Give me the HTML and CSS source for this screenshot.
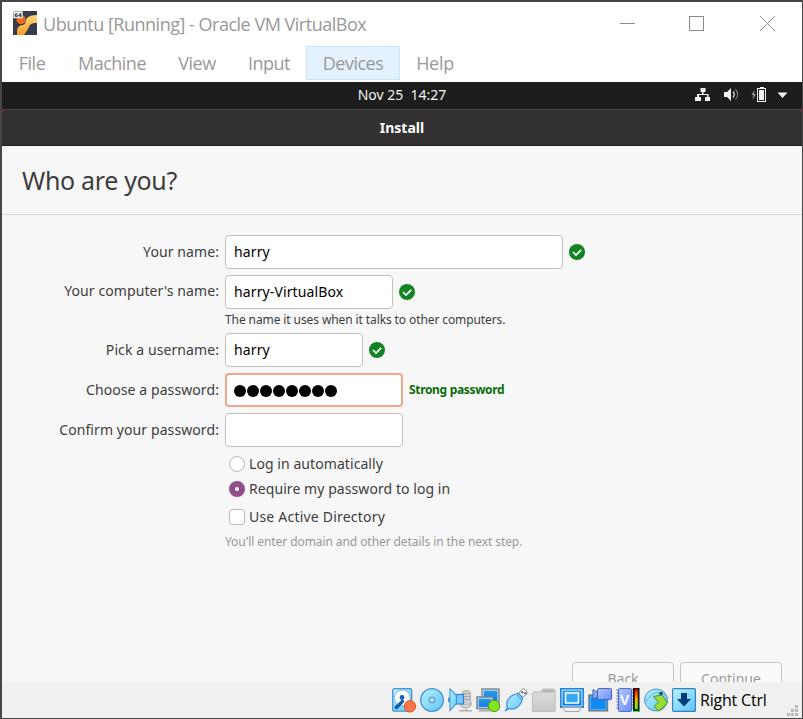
FILE: index.html
```html
<!DOCTYPE html>
<html lang="en">
<head>
<meta charset="utf-8">
<title>Ubuntu [Running] - Oracle VM VirtualBox</title>
<link rel="stylesheet" href="styles.css">
</head>
<body>
<div class="window">
  <header class="titlebar">
    <svg class="app-icon" width="24" height="24" viewBox="0 0 24 24">
      <defs><linearGradient id="or" x1="0" y1="0" x2="0" y2="1"><stop offset="0" stop-color="#ffd777"/><stop offset="1" stop-color="#f79a2c"/></linearGradient></defs>
      <rect width="24" height="24" fill="#363b49"/>
      <circle cx="8" cy="8.500" r="4.500" fill="#f36a1d"/>
      <path d="M4 24v-4c0-4 3-6 6-6 3-1 2-4 4-7 2-2 5-3 10-3v8c-5 0-7 1-8 4-1 2-3 5-5 8z" fill="url(#or)"/>
      <rect x=".5" y=".5" width="9" height="6.500" fill="#fff" stroke="#bbb" stroke-width=".7"/>
      <text x="1.200" y="6" class="badge64">64</text>
    </svg>
    <span class="title">Ubuntu [Running] - Oracle VM VirtualBox</span>
    <svg class="controls" width="156" height="17" viewBox="0 0 156 17" fill="none" stroke="#8c8c8c" shape-rendering="crispEdges">
      <path d="M0 8.500h15M69.500 1.500h14v14h-14z"/><path d="M140 1l15 15M155 1l-15 15" shape-rendering="auto"/>
    </svg>
  </header>
  <nav class="menu">
    <span class="m-file">File</span><span class="m-machine">Machine</span><span class="m-view">View</span><span class="m-input">Input</span><span class="m-devices active">Devices</span><span class="m-help">Help</span>
  </nav>
  <div class="topbar">
    <span class="clock">Nov 25&nbsp; 14:27</span>
    <svg class="tray" width="93" height="16" viewBox="0 0 93 16" fill="#f2f2f2">
      <path d="M5.500 1h5v4h-2v2h5v3h1.500v4h-5v-4h2V8h-8v2h2v4H0v-4h2V7h5V5H5.500z"/>
      <path d="M29 5h3l4-4v13l-4-4h-3z"/>
      <path d="M38 4.500q2.500 3 0 6" fill="none" stroke="#ddd" stroke-width="1.300"/>
      <path d="M40.500 2.500q4.500 5 0 10" fill="none" stroke="#777" stroke-width="1.200"/>
      <path d="M59.500 3l-3 5h2l-1 5 3.500-6h-2z" fill="#999"/>
      <path d="M65 0h4v1h2v14h-9V1h3z"/><path d="M63 2h7v12h-7z" fill="#1d1d1d"/><path d="M64 3h5v10h-5z"/>
      <path d="M82.500 5.500h10l-5 5.500z"/>
    </svg>
  </div>
  <div class="install-wrap"><div class="install"><span>Install</span></div></div>
  <main class="guest">
    <h1><span>Who are you?</span></h1>
    <div class="form">
      <div class="row"><label>Your name:</label><div class="field w338"><span>harry</span></div><svg class="ok" width="16" height="16" viewBox="0 0 16 16"><circle cx="8" cy="8" r="8" fill="#138424"/><path d="M4 8l3 3 5.200-5.200" fill="none" stroke="#fff" stroke-width="1.700"/></svg></div>
      <div class="row"><label class="high">Your computer's name:</label><div class="field w168"><span>harry-VirtualBox</span></div><svg class="ok" width="16" height="16" viewBox="0 0 16 16"><circle cx="8" cy="8" r="8" fill="#138424"/><path d="M4 8l3 3 5.200-5.200" fill="none" stroke="#fff" stroke-width="1.700"/></svg></div>
      <p class="hint">The name it uses when it talks to other computers.</p>
      <div class="row"><label>Pick a username:</label><div class="field w138"><span>harry</span></div><svg class="ok" width="16" height="16" viewBox="0 0 16 16"><circle cx="8" cy="8" r="8" fill="#138424"/><path d="M4 8l3 3 5.200-5.200" fill="none" stroke="#fff" stroke-width="1.700"/></svg></div>
      <div class="row"><label>Choose a password:</label><div class="field w178 focus"><i></i><i></i><i></i><i></i><i></i><i></i><i></i><i></i></div><b class="strong">Strong password</b></div>
      <div class="row"><label>Confirm your password:</label><div class="field w178"></div></div>
      <div class="opt o1"><span class="radio"></span><span>Log in automatically</span></div>
      <div class="opt o2"><span class="radio on"></span><span>Require my password to log in</span></div>
      <div class="opt o3"><span class="check"></span><span>Use Active Directory</span></div>
      <p class="hint dim">You'll enter domain and other details in the next step.</p>
    </div>
    <div class="actions"><div class="btn">Back</div><div class="btn">Continue</div></div>
  </main>
  <footer class="status">
    <svg class="devices" width="304" height="26" viewBox="0 0 304 26">
      <defs>
        <linearGradient id="sky" x1="0" y1="0" x2="1" y2="1"><stop offset="0" stop-color="#b9f1ff"/><stop offset="1" stop-color="#5fc4fb"/></linearGradient>
        <linearGradient id="blue" x1="0" y1="0" x2="0" y2="1"><stop offset="0" stop-color="#2f9fe6"/><stop offset="1" stop-color="#0878e8"/></linearGradient>
        <linearGradient id="peri" x1="0" y1="0" x2="1" y2="1"><stop offset="0" stop-color="#b4c8ff"/><stop offset="1" stop-color="#6d8cf5"/></linearGradient>
        <linearGradient id="gray" x1="0" y1="0" x2="0" y2="1"><stop offset="0" stop-color="#dedede"/><stop offset="1" stop-color="#c9c9c9"/></linearGradient>
        <linearGradient id="heat" x1="0" y1="0" x2="0" y2="1"><stop offset="0" stop-color="#f00"/><stop offset=".5" stop-color="#ffb400"/><stop offset="1" stop-color="#5f0"/></linearGradient>
      </defs>
      <g><rect x=".7" y=".7" width="19" height="22.500" rx="1.500" fill="url(#sky)" stroke="#4c94d0" stroke-width="1.300"/><circle cx="10.300" cy="9.800" r="7.800" fill="#fff" stroke="#7dabcf" stroke-width=".8"/><circle cx="10" cy="9.500" r="2.400" fill="#1560b4"/><path d="M10.500 11l2 2.500-7 7.500q-3 1-3-1.500 0-2 2.500-3z" fill="#0f5cb0"/><circle cx="18" cy="18.300" r="5.700" fill="#ff7547" stroke="#d95324"/></g>
      <g transform="translate(28)"><circle cx="12" cy="12" r="11.300" fill="url(#sky)" stroke="#3f91d0" stroke-width="1.300"/><circle cx="12" cy="12" r="2.700" fill="#e9f6fc" stroke="#4a97d0" stroke-width="1.200"/><circle cx="12" cy="12" r="1" fill="#a4cbe2"/></g>
      <g transform="translate(56)"><rect x="14" y="2.500" width="8.500" height="14.500" rx="3" fill="#cfcfcf" stroke="#b0b0b0"/><path d="M15 5.500h8M15 8.500h8M15 11.500h8" stroke="#a8a8a8"/><path d="M12 15q1 4.500 6 4.500t5.500-5M18 19v3M11 22.700h13" fill="none" stroke="#b0b0b0" stroke-width="1.500"/><rect x="7" y="6.500" width="8.500" height="9.500" fill="#78c8fb" stroke="#2a83cf" stroke-width="1.200"/><path d="M2 .8l6.500 6.500v8L2 22.500z" fill="url(#sky)" stroke="#3e96d9" stroke-width="1.100"/><rect x="0" y="9.500" width="2" height="4.500" fill="#3e96d9"/></g>
      <g transform="translate(84)"><rect x="6" y="1" width="17" height="14" fill="url(#blue)" stroke="#8a8a8a" stroke-width="1.500"/><rect x="7.200" y="2.200" width="14.600" height="11.600" fill="none" stroke="#e0f0fa" stroke-width=".8"/><rect x="1" y="9" width="16" height="11.500" fill="url(#blue)" stroke="#808080" stroke-width="1.500"/><rect x="2.200" y="10.200" width="13.600" height="9.100" fill="none" stroke="#e0f0fa" stroke-width=".8"/><path d="M4 21.500h10v2H2z" fill="#aaa"/><circle cx="18" cy="18" r="5.700" fill="#83e51f" stroke="#4e9d13"/></g>
      <g transform="translate(112)"><path d="M13.500 6.500l5.500-6q4 1 4.500 4.500L17.500 10.500z" fill="#f2f2f2" stroke="#8d8d8d"/><path d="M17.500 3.500l1.500 1.500M20.500 4.500l1.500 1.500" stroke="#444" stroke-width="1.600"/><path d="M1 23l2.500-3.500c-2.500-5 1.500-12 8.500-13.500l2.500-.5 4 4-.5 2.500c-1 6-7.500 10.500-13 8.500z" fill="url(#sky)" stroke="#3b8fd3" stroke-width="1.200"/><path d="M13 7l4 4" stroke="#398bcc"/></g>
      <g transform="translate(140)"><path d="M.6 5.500q0-1.500 1.500-1.500h6l3-3h10q2 0 2 2v20.400H.6z" fill="url(#gray)" stroke="#bbb"/><path d="M9 4.500l2.500-3h10l1.500 3z" fill="#b6b6b6"/></g>
      <g transform="translate(168)"><rect x=".8" y=".8" width="22.400" height="18.400" fill="#d9f3ff" stroke="#2485d2" stroke-width="1.600"/><rect x="2.500" y="2.500" width="19" height="15" fill="url(#blue)"/><rect x="5.500" y="5" width="13" height="10" fill="#38a9f0" stroke="#fff" stroke-width="1.500"/><path d="M3 19.500h18l-2 4H5z" fill="#eee" stroke="#aaa"/></g>
      <g transform="translate(196)"><rect x="1" y="7" width="18.500" height="15.800" fill="#118bf4" stroke="#777" stroke-width="1.400"/><path d="M2.300 8.300h16v13.200h-16z" fill="none" stroke="#52b5f8"/><path d="M5 1.500l4.500 3V9L5 11.500z" fill="#8ba7f5" stroke="#4263bc"/><rect x="9.500" y=".6" width="14" height="11" rx="1" fill="url(#peri)" stroke="#4263bc"/></g>
      <g transform="translate(224)"><path d="M.5 2h17M.5 5h17M.5 8h17M.5 11h17M.5 14h17M.5 17h17M.5 20h17" stroke="#3b55a9" stroke-width="1.200"/><rect x="2.500" y=".6" width="13" height="22.800" rx="1" fill="url(#peri)" stroke="#4967c4"/><text class="vee" x="4" y="17">V</text><path d="M17 0h6.500v24H17z" fill="#111"/><path d="M18.800 1.500h3v19.500h-3z" fill="url(#heat)"/><path d="M17 22.800h6.500V24H17z" fill="#20f500"/></g>
      <g transform="translate(252)"><ellipse cx="12" cy="12" rx="11.400" ry="11" fill="url(#sky)" stroke="#4b92be"/><path d="M1 15Q8 2 17 5T23 14" fill="none" stroke="#60b4dd"/><path d="M9.500 8.500l8.500-1.500 5.500 8-8.500 8-5-4.500 4.500-4.500z" fill="#97df35" stroke="#559219"/><circle cx="17" cy="5.500" r="1.800" fill="#17476a"/></g>
      <g transform="translate(280)"><rect x=".6" y=".6" width="22.800" height="22.800" rx="1" fill="url(#sky)" stroke="#3582bd" stroke-width="1.200"/><path d="M9 5h6v6h4l-7 7.500-7-7.500h4z" fill="#063b7b"/></g>
    </svg>
    <span class="hostkey">Right Ctrl</span>
    <svg class="grip" width="11" height="11" viewBox="0 0 11 11" fill="#b9b9b9"><path d="M8 0h3v3H8zM4 4h3v3H4zM8 4h3v3H8zM0 8h3v3H0zM4 8h3v3H4zM8 8h3v3H8z"/></svg>
  </footer>
</div>
</body>
</html>
```
FILE: styles.css
```css
* { box-sizing: border-box; }
body { margin: 0; overflow: hidden; font-family: "Noto Sans", sans-serif; }
.window { width: 803px; height: 719px; display: flex; flex-direction: column; background: #fff; border: solid #464646; border-width: 2px 1px 1px 2px; }
svg { display: block; flex: none; }
span, label, p { white-space: nowrap; }

.titlebar { height: 42px; display: flex; align-items: center; padding-left: 11px; color: #999; }
.title { margin: 2px 0 0 6px; font-size: 18px; letter-spacing: -.49px; font-family: "Open Sans", sans-serif; }
.controls { margin: 0 26px 0 auto; }
.badge64 { font: bold 5.500px "DejaVu Sans", sans-serif; fill: #222; }
.vee { font: bold 14px "Liberation Sans", sans-serif; fill: #fff; }

.menu { height: 38px; display: flex; align-items: center; color: #999; font-size: 18px; letter-spacing: -.5px; font-family: "Open Sans", sans-serif; }
.menu span { height: 34px; text-align: center; border: 1px solid transparent; line-height: 33px; }
.menu .active { background: #e3f2fd; border-color: #c9e6fb; }
.m-file { width: 60px; }
.m-machine { width: 100px; }
.m-view { width: 70px; }
.m-input { width: 74px; }
.m-devices { width: 94px; }
.m-help { width: 70px; letter-spacing: -.3px; }

.topbar { height: 27px; display: grid; grid-template-columns: 1fr auto 1fr; align-items: center; background: #1d1d1d; color: #f2f2f2; }
.clock { grid-column: 2; font-size: 14px; margin-top: -2px; }
.tray { justify-self: end; margin: -1px 14px 0 0; }

.install-wrap { height: 37px; background: #8d1c22; }
.install { height: 37px; border-radius: 5px 5px 0 0; background: #323030; border-top: 1px solid #484646; border-bottom: 1px solid #1b191b; display: flex; align-items: center; justify-content: center; color: #fff; font-size: 14px; font-weight: bold; }

.guest { flex: 1; min-height: 0; overflow: hidden; background: #f7f7f7; color: #3d3d3d; font-size: 14px; }
h1 { margin: 0; height: 69px; padding-left: 20px; border-bottom: 1px solid #d9d9d9; font-size: 25px; font-weight: 400; letter-spacing: -.33px; line-height: 69px; }
.form { padding-top: 20px; height: 447px; }
.row { display: flex; align-items: center; height: 34px; margin-bottom: 6px; }
.row label { width: 217px; padding-bottom: 2px; text-align: right; letter-spacing: .09px; }
.row .high { padding-bottom: 4px; }
.field { height: 34px; margin-left: 6px; padding-left: 8px; border: 1px solid #c3c1bf; border-radius: 4px; background: #fff; color: #000; display: flex; align-items: center; letter-spacing: .12px; }
.field span { padding-bottom: 2px; }
.w338 { width: 338px; } .w168 { width: 168px; } .w138 { width: 138px; } .w178 { width: 178px; }
.focus { border: 2px solid #f4a78e; padding-left: 7px; gap: 1px; }
.focus i { width: 12px; height: 12px; border-radius: 50%; background: #000; margin-top: 2px; }
.ok { margin-left: 6px; }
.strong { margin-left: 6px; padding-bottom: 2px; color: #0a6b0a; font-size: 12px; letter-spacing: -.33px; }
.hint { margin: -5px 0 3px 223px; height: 20px; line-height: 20px; font-size: 12px; letter-spacing: -.1px; }
.opt { display: flex; align-items: center; height: 25px; padding-left: 227px; gap: 4px; letter-spacing: .07px; }
.o1 { margin-top: -2px; }
.o3 { height: 31px; letter-spacing: .21px; }
.radio, .check { width: 16px; height: 16px; border: 1px solid #bcb9b6; border-radius: 50%; background: #fff; }
.radio.on { border: 6px solid #924d8b; }
.check { border-radius: 3px; }
.dim { margin: 0 0 0 223px; color: #979797; letter-spacing: -.08px; }
.actions { display: flex; gap: 6px; padding-left: 570px; }
.btn { width: 102px; height: 34px; border: 1px solid #c7c5c3; border-radius: 4px; background: #fafafa; color: #999; text-align: center; line-height: 32px; }

.status { height: 36px; display: flex; align-items: flex-start; background: #f0f0f0; padding: 6px 4px 0 390px; }
.hostkey { margin-left: 4px; color: #000; font-size: 16px; letter-spacing: -.2px; line-height: 24px; font-family: "Open Sans", sans-serif; }
.grip { margin: 17px 0 0 auto; }
```
